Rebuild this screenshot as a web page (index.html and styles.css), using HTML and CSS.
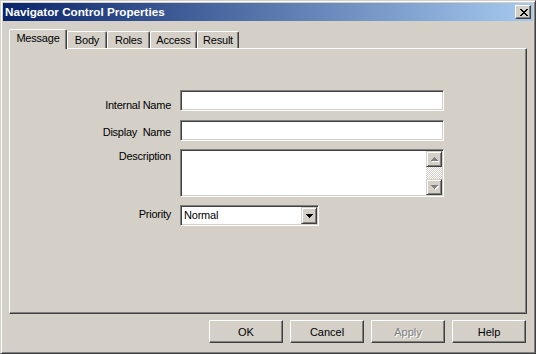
FILE: index.html
```html
<!DOCTYPE html>
<html>
<head>
<meta charset="utf-8">
<title>Navigator Control Properties</title>
<link rel="stylesheet" href="styles.css">
</head>
<body>
<div class="window">
  <div class="titlebar">
    <span class="title">Navigator Control Properties</span>
    <span class="close">
      <svg width="8" height="7" viewBox="0 0 8 7" shape-rendering="crispEdges"><path fill="#000" d="M0 0h2v1H0z M6 0h2v1H6z M1 1h2v1H1z M5 1h2v1H5z M2 2h4v1H2z M3 3h2v1H3z M2 4h4v1H2z M1 5h2v1H1z M5 5h2v1H5z M0 6h2v1H0z M6 6h2v1H6z"/></svg>
    </span>
  </div>

  <div class="tabs">
    <div class="tab tab-active w-message">Message</div>
    <div class="tab w-body">Body</div>
    <div class="tab w-roles">Roles</div>
    <div class="tab w-access">Access</div>
    <div class="tab w-result">Result</div>
  </div>

  <div class="panel">
    <div class="form">
      <label class="label pad-internal">Internal Name</label>
      <input class="field" type="text">

      <label class="label pad-display">Display&nbsp; Name</label>
      <input class="field" type="text">

      <label class="label pad-desc">Description</label>
      <div class="textbox">
        <div class="scrollbar">
          <div class="sb-btn">
            <svg width="8" height="5" viewBox="0 0 8 5" shape-rendering="crispEdges"><path fill="#fff" d="M4 1h1v1H4z M3 2h3v1H3z M2 3h5v1H2z M1 4h7v1H1z"/><path fill="#808080" d="M3 0h1v1H3z M2 1h3v1H2z M1 2h5v1H1z M0 3h7v1H0z"/></svg>
          </div>
          <div class="sb-track"></div>
          <div class="sb-btn">
            <svg width="8" height="5" viewBox="0 0 8 5" shape-rendering="crispEdges"><path fill="#fff" d="M1 1h7v1H1z M2 2h5v1H2z M3 3h3v1H3z M4 4h1v1H4z"/><path fill="#808080" d="M0 0h7v1H0z M1 1h5v1H1z M2 2h3v1H2z M3 3h1v1H3z"/></svg>
          </div>
        </div>
      </div>

      <label class="label pad-priority">Priority</label>
      <div class="select">
        <span class="select-value">Normal</span>
        <span class="select-btn">
          <svg width="7" height="4" viewBox="0 0 7 4" shape-rendering="crispEdges"><path fill="#000" d="M0 0h7v1H0z M1 1h5v1H1z M2 2h3v1H2z M3 3h1v1H3z"/></svg>
        </span>
      </div>
    </div>
  </div>

  <div class="buttons">
    <button class="btn" type="button">OK</button>
    <button class="btn" type="button">Cancel</button>
    <button class="btn btn-disabled" type="button">Apply</button>
    <button class="btn" type="button">Help</button>
  </div>
</div>
</body>
</html>
```
FILE: styles.css
```css
* {
  box-sizing: border-box;
}

body {
  margin: 0;
  font-family: "Liberation Sans", Arial, sans-serif;
  font-size: 11px;
  color: #000;
  background: #d4d0c8;
}

.window {
  width: 536px;
  height: 354px;
  background: #d4d0c8;
  border: 1px solid;
  border-color: #d4d0c8 #404040 #404040 #d4d0c8;
  box-shadow: inset 1px 1px #fff, inset -1px -1px #808080;
  padding: 2px;
  display: flex;
  flex-direction: column;
}

/* Title bar */
.titlebar {
  flex: none;
  height: 18px;
  background: linear-gradient(to right, #0a246a, #a6caf0);
  display: flex;
  align-items: center;
  justify-content: space-between;
  padding: 0 2px;
}

.title {
  color: #fff;
  font-weight: bold;
  font-size: 11.7px;
  line-height: 18px;
  white-space: nowrap;
}

.close {
  width: 16px;
  height: 14px;
  background: #d4d0c8;
  border: 1px solid;
  border-color: #fff #404040 #404040 #fff;
  box-shadow: inset -1px -1px #808080;
  display: flex;
  align-items: center;
  justify-content: center;
  padding-left: 1px;
}

.close svg {
  display: block;
}

/* Tabs */
.tabs {
  flex: none;
  height: 19px;
  margin: 8px 6px 0;
  display: flex;
  align-items: flex-end;
}

.tab {
  flex: none;
  height: 17px;
  border: 1px solid;
  border-bottom: none;
  border-color: #fff #404040 transparent #fff;
  box-shadow: inset -1px 0 #808080;
  border-radius: 2px 2px 0 0;
  text-align: center;
  line-height: 13px;
  padding-top: 2px;
  letter-spacing: -0.2px;
  white-space: nowrap;
}

.tab-active {
  height: 20px;
  margin-bottom: -1px;
  position: relative;
  z-index: 1;
  background: #d4d0c8;
  padding-top: 2px;
}

.w-message { width: 58px; }
.w-body { width: 40px; }
.w-roles { width: 43px; }
.w-access { width: 47px; }
.w-result { width: 42px; }

/* Panel */
.panel {
  flex: none;
  height: 266px;
  margin: 0 6px;
  border: 1px solid;
  border-color: #fff #404040 #404040 #fff;
  box-shadow: inset -1px -1px #808080;
}

.form {
  display: grid;
  grid-template-columns: 161px 264px;
  column-gap: 9px;
  row-gap: 8px;
  padding-top: 41px;
}

.label {
  text-align: right;
  line-height: 13px;
  letter-spacing: -0.25px;
  white-space: nowrap;
}

.pad-internal { padding-top: 9px; }
.pad-display { padding-top: 6px; }
.pad-desc { padding-top: 1px; }
.pad-priority { padding-top: 3px; }

.field,
.textbox,
.select {
  background: #fff;
  border: 1px solid;
  border-color: #808080 #fff #fff #808080;
  box-shadow: inset 1px 1px #404040, inset -1px -1px #d4d0c8;
}

.field {
  display: block;
  width: 264px;
  height: 21px;
  margin: 0;
  padding: 0 3px;
  font: inherit;
  outline: none;
  appearance: none;
  border-radius: 0;
}

.textbox {
  width: 264px;
  height: 48px;
  padding: 1px;
  display: flex;
  justify-content: flex-end;
}

.scrollbar {
  width: 16px;
  display: flex;
  flex-direction: column;
}

.sb-btn,
.select-btn {
  flex: none;
  background: #d4d0c8;
  border: 1px solid;
  border-color: #d4d0c8 #404040 #404040 #d4d0c8;
  box-shadow: inset 1px 1px #fff, inset -1px -1px #808080;
  display: flex;
  align-items: center;
  justify-content: center;
}

.sb-btn {
  height: 16px;
  padding-left: 1px;
}

.sb-btn svg,
.select-btn svg {
  display: block;
}

.sb-track {
  flex: 1;
  background: repeating-conic-gradient(#fff 0 25%, #d4d0c8 0 50%) 0 0 / 2px 2px;
}

.select {
  width: 139px;
  height: 21px;
  padding: 1px;
  display: flex;
}

.select-value {
  flex: 1;
  padding-left: 2px;
  line-height: 17px;
  letter-spacing: -0.2px;
}

.select-btn {
  width: 16px;
  height: 17px;
}

/* Buttons */
.buttons {
  flex: none;
  display: flex;
  justify-content: flex-end;
  gap: 7px;
  margin-top: 6px;
  padding-right: 7px;
}

.btn {
  width: 74px;
  height: 23px;
  margin: 0;
  padding: 0;
  font-family: "Liberation Sans", Arial, sans-serif;
  font-size: 11px;
  color: #000;
  background: #d4d0c8;
  border: 1px solid;
  border-color: #fff #404040 #404040 #fff;
  box-shadow: inset -1px -1px #808080;
  border-radius: 0;
  appearance: none;
}

.btn-disabled {
  color: #808080;
  text-shadow: 1px 1px #fff;
}
```
